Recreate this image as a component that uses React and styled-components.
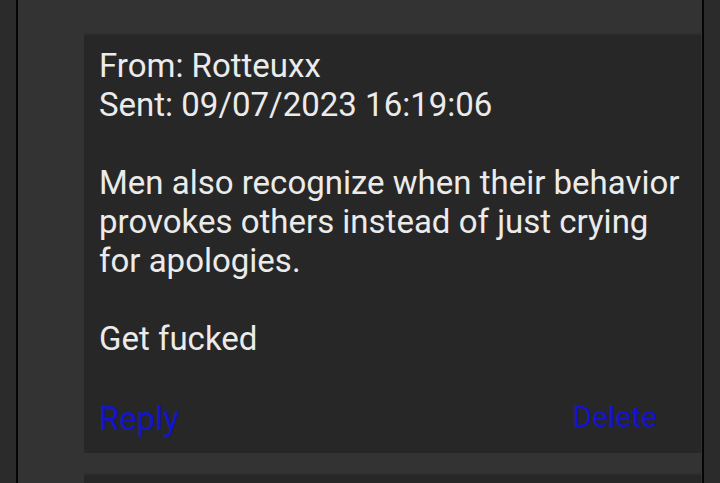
import styled, { createGlobalStyle } from "styled-components";

const Global = createGlobalStyle`
  html, body {
    margin: 0;
    padding: 0;
    background: #2b2b2b;
    height: 100%;
    overflow: hidden;
  }
  #root {
    height: 100%;
  }
`;

const Page = styled.div`
  height: 100%;
  padding-left: 16px;
  box-sizing: border-box;
`;

const Column = styled.div`
  width: 688px;
  height: 100%;
  overflow: hidden;
  background: #333333;
  border-left: 2px solid #050505;
  border-right: 2px solid #050505;
  padding: 33px 1px 0 66px;
  box-sizing: border-box;
  display: flex;
  flex-direction: column;
  gap: 20px;
  font-family: Roboto, "Liberation Sans", sans-serif;
`;

const Card = styled.div`
  flex-shrink: 0;
  background: #272727;
  border-top: 2px solid #2d2d2d;
  padding: 11px 15px 17px 15px;
  color: #ebebeb;
  font-size: 33px;
  line-height: 39px;
  min-height: ${(p) => p.$min || 0}px;
`;

const Line = styled.div`
  white-space: pre-wrap;
`;

const Gap = styled.div`
  height: 39px;
`;

const Actions = styled.div`
  display: flex;
  justify-content: space-between;
  align-items: center;
  padding-right: 29px;
  height: 39px;
`;

const Link = styled.a`
  color: #1414cc;
  font-size: ${(p) => p.$size}px;
  text-decoration: none;
  cursor: pointer;
  margin-top: ${(p) => p.$shift || 0}px;
`;

export default function App() {
  return (
    <Page>
      <Global />
      <Column>
        <Card>
          <Line>From: Rotteuxx</Line>
          <Line>Sent: 09/07/2023 16:19:06</Line>
          <Gap />
          <Line>
            Men also recognize when their behavior provokes others instead of
            just crying for apologies.
          </Line>
          <Gap />
          <Line>Get fucked</Line>
          <Gap />
          <Actions>
            <Link $size={33} $shift={4}>Reply</Link>
            <Link $size={30}>Delete</Link>
          </Actions>
        </Card>
        <Card $min={40} />
      </Column>
    </Page>
  );
}
